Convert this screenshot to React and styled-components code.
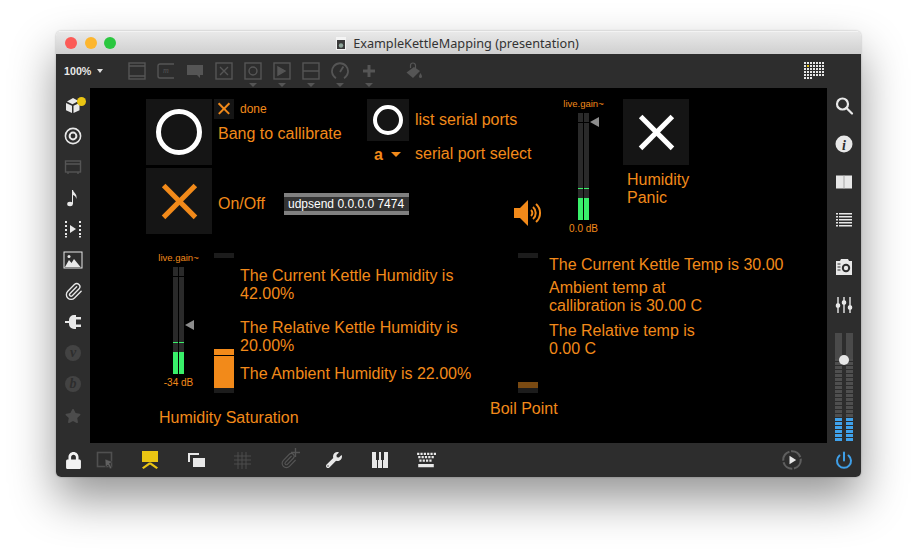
import React from "react";
import styled, { createGlobalStyle } from "styled-components";
import { FaLock, FaStar, FaWrench } from "react-icons/fa";
import { Paperclip } from "lucide-react";

const ORANGE = "#f28a1a";
const DIM = "#555";
const LIGHT = "#e8e8e8";

export default function App() {
  return (
    <>
      <GlobalStyle />
      <Window>
        <TitleBar>
          <Lights>
            <Light $color="#fc5b57" />
            <Light $color="#fdb62e" />
            <Light $color="#2ac73f" />
          </Lights>
          <TitleText>
            <DocIcon viewBox="0 0 10 13">
              <rect width="10" height="13" fill="#f4f4f4" />
              <rect x="1" y="3" width="8" height="9" fill="#3a3a3a" />
              <circle cx="5" cy="8.5" r="2.2" fill="#8fa59a" />
            </DocIcon>
            ExampleKettleMapping (presentation)
          </TitleText>
        </TitleBar>

        <TopBar>
          <ZoomLabel>100%</ZoomLabel>
          <ZoomCaret />
          <ObjectTools>
            <ToolSlot>
              <Icon viewBox="0 0 18 18" fill="none" stroke={DIM} strokeWidth="1.4">
                <rect x="1" y="1" width="16" height="16" />
                <path d="M1 4h16M1 14h16" />
              </Icon>
            </ToolSlot>
            <ToolSlot>
              <Icon viewBox="0 0 18 18" fill="none" stroke={DIM} strokeWidth="1.4">
                <path d="M17 2H3a2 2 0 0 0-2 2v10a2 2 0 0 0 2 2h14" />
                <text x="6" y="11" fontSize="8" fontStyle="italic" fontFamily="Liberation Serif" fill={DIM} stroke="none">m</text>
              </Icon>
            </ToolSlot>
            <ToolSlot>
              <Icon viewBox="0 0 18 18" fill={DIM}>
                <path d="M1 3h16v10h-3v3l-3-3H1z" />
              </Icon>
            </ToolSlot>
            <ToolSlot>
              <Icon viewBox="0 0 18 18" fill="none" stroke={DIM} strokeWidth="1.4">
                <rect x="1" y="1" width="16" height="16" />
                <path d="M5 5l8 8M13 5l-8 8" />
              </Icon>
            </ToolSlot>
            <ToolSlot $menu>
              <Icon viewBox="0 0 18 18" fill="none" stroke={DIM} strokeWidth="1.4">
                <rect x="1" y="1" width="16" height="16" />
                <circle cx="9" cy="9" r="4" />
              </Icon>
            </ToolSlot>
            <ToolSlot $menu>
              <Icon viewBox="0 0 18 18" fill="none" stroke={DIM} strokeWidth="1.4">
                <rect x="1" y="1" width="16" height="16" />
                <path d="M5 5l7 4-7 4z" fill={DIM} />
              </Icon>
            </ToolSlot>
            <ToolSlot $menu>
              <Icon viewBox="0 0 18 18" fill="none" stroke={DIM} strokeWidth="1.4">
                <rect x="1" y="1" width="16" height="16" />
                <path d="M1 9h16" />
              </Icon>
            </ToolSlot>
            <ToolSlot $menu>
              <Icon viewBox="0 0 18 18" fill="none" stroke={DIM} strokeWidth="1.8">
                <path d="M5 16.2A8 8 0 1 1 13 16.2" />
                <path d="M9 10l3.4-5.4" />
              </Icon>
            </ToolSlot>
            <ToolSlot $menu>
              <Icon viewBox="0 0 18 18" fill="none" stroke={DIM} strokeWidth="3">
                <path d="M9 3v12M3 9h12" />
              </Icon>
            </ToolSlot>
            <BucketSlot>
              <Icon viewBox="0 0 18 18" fill={DIM}>
                <path d="M9 5L1.500 10.500 8 16l7-7z" />
                <path d="M5.500 6V3.500a2.500 2.500 0 0 1 5 0V7" fill="none" stroke={DIM} strokeWidth="1.200" />
                <path d="M15.500 11c.8 1.600 1.500 2.400 1.500 3.400a1.500 1.500 0 0 1-3 0c0-1 .7-1.800 1.500-3.400z" />
              </Icon>
            </BucketSlot>
          </ObjectTools>
          <GridIcon viewBox="0 0 20 19">
            {GRID_CELLS.map(([x, y]) => (
              <rect
                key={`${x}-${y}`}
                x={x * 3}
                y={y * 3}
                width="2"
                height="2"
                fill={x === 1 && y === 1 ? "#e8c414" : "#e6e6e6"}
              />
            ))}
          </GridIcon>
        </TopBar>

        <Middle>
          <LeftRail>
            <RailSlot>
              <Icon viewBox="0 0 20 20" fill={LIGHT}>
                <path d="M4 6.500l6-3.500 5.500 3-6 3.200z" />
                <path d="M3 8l6 2.800V18l-6-2.800z" />
                <path d="M10.500 10.800l6-2.800v7.200L10.500 18z" />
              </Icon>
              <Notify />
            </RailSlot>
            <RailSlot>
              <Icon viewBox="0 0 20 20" fill="none" stroke={LIGHT} strokeWidth="1.6">
                <circle cx="10" cy="10" r="7.600" />
                <circle cx="10" cy="10" r="3.400" strokeWidth="2" />
              </Icon>
            </RailSlot>
            <RailSlot>
              <Icon viewBox="0 0 20 20" fill="none" stroke={DIM} strokeWidth="1.400">
                <rect x="2.500" y="4" width="15" height="11" />
                <path d="M2.500 7h15M5 15v2M15 15v2" />
              </Icon>
            </RailSlot>
            <RailSlot>
              <Icon viewBox="0 0 20 20" fill={LIGHT}>
                <ellipse cx="7" cy="16" rx="2.800" ry="2.200" />
                <path d="M9 16V2h1c.4 3 4.800 4 3.300 9-.2-2.500-1.800-3.500-3.300-4v9z" />
              </Icon>
            </RailSlot>
            <RailSlot>
              <Icon viewBox="0 0 20 20" fill={LIGHT}>
                <path d="M2 2h2v2H2zM2 6h2v2H2zM2 10h2v2H2zM2 14h2v2H2zM2 17h2v1.500H2zM16 2h2v2h-2zM16 6h2v2h-2zM16 10h2v2h-2zM16 14h2v2h-2zM16 17h2v1.500h-2z" />
                <path d="M7 6l6 4-6 4z" />
              </Icon>
            </RailSlot>
            <RailSlot>
              <Icon viewBox="0 0 20 20">
                <rect x="1" y="2" width="18" height="16" fill="none" stroke={LIGHT} strokeWidth="1" />
                <path d="M2 17l4-7 2.500 3 2.500-4 6.500 8z" fill={LIGHT} />
                <circle cx="6" cy="6.500" r="1.500" fill={LIGHT} />
              </Icon>
            </RailSlot>
            <RailSlot>
              <Paperclip size={19} color={LIGHT} strokeWidth={1.7} />
            </RailSlot>
            <RailSlot>
              <Icon viewBox="0 0 20 20" fill={LIGHT}>
                <path d="M2 9h4V8a5 5 0 0 1 5-5h2v14h-2a5 5 0 0 1-5-5v-1H2z" />
                <path d="M13 5h5v2.500h-5zM13 12.500h5V15h-5z" />
              </Icon>
            </RailSlot>
            <RailSlot>
              <Badge>v</Badge>
            </RailSlot>
            <RailSlot>
              <Badge>b</Badge>
            </RailSlot>
            <StarSlot>
              <FaStar size={16} color="#4c4c4c" />
            </StarSlot>
          </LeftRail>

          <Canvas>
            <Button $x={56} $y={11} $size={66}>
              <Ring $size={46} $stroke={5} />
            </Button>
            <Button $x={124} $y={11} $size={20}>
              <Cross $size={11} $stroke={2} $color={ORANGE} />
            </Button>
            <Caption $x={150} $y={14}>done</Caption>
            <Label $x={128} $y={37}>Bang to callibrate</Label>
            <Button $x={56} $y={80} $size={66}>
              <Cross $size={32} $stroke={5} $color={ORANGE} />
            </Button>
            <Label $x={128} $y={107}>On/Off</Label>
            <UdpObject>udpsend 0.0.0.0 7474</UdpObject>
            <Button $x={277} $y={11} $size={42}>
              <Ring $size={30} $stroke={4} />
            </Button>
            <Label $x={325} $y={23}>list serial ports</Label>
            <MenuValue>a</MenuValue>
            <MenuCaret />
            <Label $x={325} $y={57}>serial port select</Label>

            <Gain $x={488} $y={25} $thumb={9} $green={22} $tick={31}>
              <GainName>live.gain~</GainName>
              <GainValue>0.0 dB</GainValue>
            </Gain>

            <Button $x={533} $y={11} $size={66}>
              <Cross $size={32} $stroke={5} $color="#fff" />
            </Button>
            <Label $x={537} $y={83}>
              Humidity
              <br />
              Panic
            </Label>
            <SpeakerIcon viewBox="0 0 28 28">
              <path d="M0 9h6l8-8v26l-8-8H0z" fill={ORANGE} />
              <path d="M17 11a4 4 0 0 1 0 6M19 8a8 8 0 0 1 0 12M22 5a12 12 0 0 1 0 18" fill="none" stroke={ORANGE} strokeWidth="2" />
            </SpeakerIcon>

            <Gain $x={83} $y={179} $thumb={58} $green={22} $tick={31}>
              <GainName>live.gain~</GainName>
              <GainValue>-34 dB</GainValue>
            </Gain>

            <Slider $x={124}>
              <SliderFill $height={39} $color={ORANGE}>
                <SliderHandle />
              </SliderFill>
            </Slider>
            <Slider $x={428}>
              <SliderFill $height={6} $color="#7a4a12" />
            </Slider>

            <Label $x={150} $y={179}>
              The Current Kettle Humidity is
              <br />
              42.00%
            </Label>
            <Label $x={150} $y={231}>
              The Relative Kettle Humidity is
              <br />
              20.00%
            </Label>
            <Label $x={150} $y={277}>The Ambient Humidity is 22.00%</Label>
            <Label $x={69} $y={321}>Humidity Saturation</Label>
            <Label $x={400} $y={312}>Boil Point</Label>
            <Label $x={459} $y={168}>The Current Kettle Temp is 30.00</Label>
            <Label $x={459} $y={191}>
              Ambient temp at
              <br />
              callibration is 30.00 C
            </Label>
            <Label $x={459} $y={234}>
              The Relative temp is
              <br />
              0.00 C
            </Label>
          </Canvas>

          <RightRail>
            <SideSlot>
              <Icon viewBox="0 0 20 20" fill="none" stroke={LIGHT} strokeWidth="2.200" strokeLinecap="round">
                <circle cx="8.500" cy="8" r="5.500" />
                <path d="M12.500 12l5.500 5.500" />
              </Icon>
            </SideSlot>
            <SideSlot>
              <Icon viewBox="0 0 20 20">
                <circle cx="10" cy="10" r="8.500" fill={LIGHT} />
                <text x="10" y="15.500" textAnchor="middle" fontSize="14" fontWeight="700" fontStyle="italic" fontFamily="Liberation Serif" fill="#2d2d2d">i</text>
              </Icon>
            </SideSlot>
            <SideSlot>
              <Icon viewBox="0 0 20 20">
                <rect x="2" y="3.500" width="16" height="13" fill={LIGHT} />
                <rect x="9.500" y="3.500" width="1" height="13" fill="#a8a8a8" />
              </Icon>
            </SideSlot>
            <SideSlot>
              <Icon viewBox="0 0 20 20" fill={LIGHT}>
                <path d="M2 3h2v1.500H2zM5 3h13v1.500H5zM2 6h2v1.500H2zM5 6h13v1.500H5zM2 9h2v1.500H2zM5 9h13v1.500H5zM2 12h2v1.500H2zM5 12h13v1.500H5zM2 15h2v1.500H2zM5 15h13v1.500H5z" />
              </Icon>
            </SideSlot>
            <CameraSlot>
              <Icon viewBox="0 0 20 20">
                <path d="M2 4h4l1-2h7l1 2h3v14H2z" fill={LIGHT} />
                <circle cx="12" cy="11" r="4.200" fill="#2d2d2d" />
                <circle cx="12" cy="11" r="2.200" fill={LIGHT} />
                <path d="M3.500 7h3M3.500 10h3M3.500 13h3" stroke="#2d2d2d" strokeWidth="1" />
              </Icon>
            </CameraSlot>
            <SideSlot>
              <Icon viewBox="0 0 20 20" stroke={LIGHT} strokeWidth="1.400" fill={LIGHT}>
                <path d="M4 2v16M10 2v16M16 2v16" />
                <rect x="2.500" y="9" width="3" height="3" rx="1" />
                <rect x="8.500" y="6" width="3" height="3" rx="1" />
                <rect x="14.500" y="11" width="3" height="3" rx="1" />
              </Icon>
            </SideSlot>
            <Volume>
              <VolumeTrack />
              <VolumeTrack />
              <VolumeKnob />
            </Volume>
          </RightRail>
        </Middle>

        <BottomBar>
          <BottomSlot>
            <FaLock size={17} color="#f2f2f2" />
          </BottomSlot>
          <SelectSlot>
            <Icon viewBox="0 0 20 20">
              <rect x="2.500" y="2.500" width="14" height="14" fill="none" stroke="#505050" strokeWidth="1.600" />
              <path d="M10 9l8 3-3.500 1.500L17 18l-2 1-2-4-2.500 2z" fill="#606060" stroke="#2d2d2d" strokeWidth=".6" />
            </Icon>
          </SelectSlot>
          <PresentSlot>
            <Icon viewBox="0 0 20 20" fill="#eac513">
              <path d="M2 1h16v11H2z" />
              <path d="M9 12.500h2l7 5-1.500 1.500L10 14.500 3.500 19 2 17.500z" />
            </Icon>
          </PresentSlot>
          <BottomSlot>
            <Icon viewBox="0 0 20 20" fill={LIGHT}>
              <path d="M2 3h11v2H4v7H2z" />
              <path d="M7 8h12v9H7z" />
            </Icon>
          </BottomSlot>
          <BottomSlot>
            <Icon viewBox="0 0 20 20" fill="none" stroke="#4d4d4d" strokeWidth="1">
              <path d="M6 2v17M10 2v17M14 2v17M2 6h17M2 10h17M2 14h17" />
            </Icon>
          </BottomSlot>
          <BottomSlot>
            <Paperclip size={17} color={DIM} strokeWidth={1.600} />
            <ClipPlus viewBox="0 0 8 8">
              <path d="M4 0v8M0 4h8" stroke={DIM} strokeWidth="1.200" />
            </ClipPlus>
          </BottomSlot>
          <BottomSlot>
            <FaWrench size={16} color={LIGHT} />
          </BottomSlot>
          <BottomSlot>
            <Icon viewBox="0 0 20 20" fill={LIGHT}>
              <path d="M2 2h4v8h1v8H2zM8 10h1V2h2v8h1v8H8zM13 10h1V2h4v16h-5z" />
            </Icon>
          </BottomSlot>
          <BottomSlot>
            <Icon viewBox="1 2 18 17" fill={LIGHT}>
              <path d="M2 4h2v2H2zM5 4h2v2H5zM8 4h2v2H8zM11 4h2v2h-2zM14 4h2v2h-2zM17 4h2v2h-2zM3 7h2v2H3zM6 7h2v2H6zM9 7h2v2H9zM12 7h2v2h-2zM15 7h2v2h-2zM4 10h2v2H4zM7 10h2v2H7zM10 10h2v2h-2zM13 10h2v2h-2zM3 14h14v3H3z" />
            </Icon>
          </BottomSlot>
          <BottomEnd>
            <BottomSlot>
              <Icon viewBox="0 0 24 24">
                <circle cx="12" cy="12" r="10.500" fill="none" stroke="#5e5e5e" strokeWidth="2.500" strokeDasharray="14 2" />
                <path d="M9 7l8 5-8 5z" fill={LIGHT} />
              </Icon>
            </BottomSlot>
            <BottomSlot>
              <Icon viewBox="0 0 20 20" fill="none" stroke="#3f9fe8" strokeWidth="2" strokeLinecap="round">
                <path d="M10 2.500v8" />
                <path d="M5.500 5.500a7 7 0 1 0 9 0" />
              </Icon>
            </BottomSlot>
          </BottomEnd>
        </BottomBar>
      </Window>
    </>
  );
}

const GRID_CELLS = [];
for (let y = 0; y < 6; y++) {
  const cols = y === 5 ? 3 : 7;
  for (let x = 0; x < cols; x++) GRID_CELLS.push([x, y]);
}

const GlobalStyle = createGlobalStyle`
  html, body {
    margin: 0;
    padding: 0;
    background: #fff;
    overflow: hidden;
  }
  body {
    width: 917px;
    height: 557px;
    font-family: "Liberation Sans", Arial, sans-serif;
  }
`;

const Window = styled.div`
  display: flex;
  flex-direction: column;
  width: 805px;
  height: 446px;
  margin: 31px 0 0 56px;
  border-radius: 5px;
  overflow: hidden;
  box-shadow: 0 22px 45px rgba(0, 0, 0, 0.42), 0 0 2px rgba(0, 0, 0, 0.3);
`;

const TitleBar = styled.div`
  position: relative;
  display: flex;
  align-items: center;
  justify-content: center;
  height: 23px;
  flex: none;
  box-sizing: border-box;
  background: linear-gradient(#e9e9e9, #cfcfcf);
  border-top: 1px solid #f3f3f3;
`;

const Lights = styled.div`
  position: absolute;
  left: 9px;
  top: 5px;
  display: flex;
  gap: 7.500px;
`;

const Light = styled.span`
  width: 12px;
  height: 12px;
  border-radius: 50%;
  background: ${(p) => p.$color};
`;

const TitleText = styled.div`
  display: flex;
  align-items: center;
  gap: 7px;
  margin-left: -2px;
  font-family: "Noto Sans", sans-serif;
  font-size: 12.700px;
  color: #333;
`;

const DocIcon = styled.svg`
  width: 10px;
  height: 13px;
`;

const TopBar = styled.div`
  display: flex;
  align-items: center;
  flex: none;
  height: 34px;
  box-sizing: border-box;
  padding: 0 37px 0 8px;
  background: #2d2d2d;
`;

const ZoomLabel = styled.span`
  font-size: 10.700px;
  font-weight: 700;
  color: #e8e8e8;
`;

const ZoomCaret = styled.span`
  margin-left: 6px;
  border-left: 3px solid transparent;
  border-right: 3px solid transparent;
  border-top: 4px solid #e0e0e0;
`;

const ObjectTools = styled.div`
  display: flex;
  align-items: center;
  gap: 11px;
  margin-left: 25px;
  flex: 1;
`;

const ToolSlot = styled.div`
  position: relative;
  width: 18px;
  height: 18px;
  ${(p) =>
    p.$menu &&
    `&::after {
      content: "";
      position: absolute;
      left: 5px;
      bottom: -7px;
      border-left: 4px solid transparent;
      border-right: 4px solid transparent;
      border-top: 4px solid #555;
    }`}
`;

const BucketSlot = styled(ToolSlot)`
  margin-left: 16px;
`;

const Icon = styled.svg`
  display: block;
  width: 100%;
  height: 100%;
`;

const GridIcon = styled.svg`
  width: 20px;
  height: 19px;
`;

const Middle = styled.div`
  display: flex;
  flex: none;
  height: 355px;
`;

const LeftRail = styled.div`
  display: flex;
  flex-direction: column;
  align-items: center;
  gap: 11px;
  width: 34px;
  flex: none;
  box-sizing: border-box;
  padding-top: 7px;
  background: #2d2d2d;
`;

const RailSlot = styled.div`
  position: relative;
  display: flex;
  align-items: center;
  justify-content: center;
  width: 20px;
  height: 20px;
`;

const StarSlot = styled(RailSlot)`
  margin-top: 1px;
`;

const Notify = styled.span`
  position: absolute;
  right: -3px;
  top: 2px;
  width: 9px;
  height: 9px;
  border-radius: 50%;
  background: #eac513;
`;

const Badge = styled.span`
  display: flex;
  align-items: center;
  justify-content: center;
  width: 16px;
  height: 16px;
  border-radius: 50%;
  background: #434343;
  color: #2d2d2d;
  font-family: "Liberation Serif", serif;
  font-style: italic;
  font-weight: 700;
  font-size: 14px;
`;

const Canvas = styled.div`
  position: relative;
  flex: 1;
  background: #000;
  overflow: hidden;
`;

const Button = styled.div`
  position: absolute;
  left: ${(p) => p.$x}px;
  top: ${(p) => p.$y}px;
  display: flex;
  align-items: center;
  justify-content: center;
  width: ${(p) => p.$size}px;
  height: ${(p) => p.$size}px;
  background: #151515;
`;

const Ring = styled.span`
  width: ${(p) => p.$size}px;
  height: ${(p) => p.$size}px;
  box-sizing: border-box;
  border: ${(p) => p.$stroke}px solid #fff;
  border-radius: 50%;
`;

const Cross = styled.span`
  position: relative;
  width: ${(p) => p.$size}px;
  height: ${(p) => p.$size}px;
  &::before,
  &::after {
    content: "";
    position: absolute;
    left: ${(p) => (p.$size - p.$stroke) / 2}px;
    top: -${(p) => p.$size * 0.2}px;
    width: ${(p) => p.$stroke}px;
    height: ${(p) => p.$size * 1.4}px;
    background: ${(p) => p.$color};
  }
  &::before {
    transform: rotate(45deg);
  }
  &::after {
    transform: rotate(-45deg);
  }
`;

const Label = styled.div`
  position: absolute;
  left: ${(p) => p.$x}px;
  top: ${(p) => p.$y}px;
  font-size: 16px;
  line-height: 18px;
  color: ${ORANGE};
  white-space: nowrap;
`;

const Caption = styled(Label)`
  font-size: 12px;
  line-height: 14px;
`;

const UdpObject = styled.div`
  position: absolute;
  left: 194px;
  top: 105px;
  width: 125px;
  height: 22px;
  box-sizing: border-box;
  padding-left: 4px;
  border: solid #808080;
  border-width: 4px 0;
  background: #333;
  color: #fff;
  font-size: 12px;
  line-height: 14px;
  white-space: nowrap;
`;

const MenuValue = styled.div`
  position: absolute;
  left: 284px;
  top: 58px;
  font-size: 16px;
  line-height: 18px;
  font-weight: 700;
  color: ${ORANGE};
`;

const MenuCaret = styled.div`
  position: absolute;
  left: 301px;
  top: 64px;
  border-left: 5px solid transparent;
  border-right: 5px solid transparent;
  border-top: 5px solid ${ORANGE};
`;

const Gain = styled.div`
  position: absolute;
  left: ${(p) => p.$x}px;
  top: ${(p) => p.$y}px;
  width: 11px;
  height: 107px;
  background:
    linear-gradient(#39f06a, #39f06a) left bottom / 5px ${(p) => p.$green}px no-repeat,
    linear-gradient(#39f06a, #39f06a) right bottom / 5px ${(p) => p.$green}px no-repeat,
    linear-gradient(#39f06a, #39f06a) left bottom ${(p) => p.$tick}px / 5px 1px no-repeat,
    linear-gradient(#39f06a, #39f06a) right bottom ${(p) => p.$tick}px / 5px 1px no-repeat,
    linear-gradient(#000, #000) center top 9px / 11px 1px no-repeat,
    linear-gradient(#000, #000) center / 1px 107px no-repeat,
    #2a2a2a;
  &::after {
    content: "";
    position: absolute;
    left: 12px;
    top: ${(p) => p.$thumb - 5}px;
    border-top: 5px solid transparent;
    border-bottom: 5px solid transparent;
    border-right: 9px solid #8c8c8c;
  }
`;

const GainName = styled.div`
  position: absolute;
  left: 50%;
  top: -15px;
  transform: translateX(-50%);
  font-size: 9.500px;
  line-height: 12px;
  color: ${ORANGE};
  white-space: nowrap;
`;

const GainValue = styled(GainName)`
  top: 110px;
  font-size: 10px;
`;

const SpeakerIcon = styled.svg`
  position: absolute;
  left: 424px;
  top: 111px;
  width: 28px;
  height: 28px;
`;

const Slider = styled.div`
  position: absolute;
  left: ${(p) => p.$x}px;
  top: 165px;
  width: 20px;
  height: 140px;
  display: flex;
  flex-direction: column;
  justify-content: flex-end;
  background:
    linear-gradient(#1c1c1c, #1c1c1c) top / 20px 5px no-repeat,
    linear-gradient(#1c1c1c, #1c1c1c) bottom / 20px 5px no-repeat;
  padding-bottom: 5px;
  box-sizing: border-box;
`;

const SliderFill = styled.div`
  position: relative;
  height: ${(p) => p.$height}px;
  background: ${(p) => p.$color};
`;

const SliderHandle = styled.span`
  position: absolute;
  left: 0;
  right: 0;
  top: 6px;
  height: 1px;
  background: #000;
`;

const RightRail = styled.div`
  display: flex;
  flex-direction: column;
  align-items: center;
  gap: 18px;
  width: 34px;
  flex: none;
  box-sizing: border-box;
  padding-top: 8px;
  background: #2d2d2d;
`;

const SideSlot = styled.div`
  display: flex;
  align-items: center;
  justify-content: center;
  width: 20px;
  height: 20px;
`;

const CameraSlot = styled(SideSlot)`
  margin-top: 9px;
`;

const Volume = styled.div`
  position: relative;
  display: flex;
  gap: 4px;
  height: 108px;
`;

const VolumeTrack = styled.div`
  width: 7px;
  height: 100%;
  background:
    linear-gradient(#4a4a4a, #4a4a4a) top / 7px 26px no-repeat,
    repeating-linear-gradient(to top, #3fa2ec 0 3px, #2d2d2d 3px 4px) bottom / 7px 24px no-repeat,
    repeating-linear-gradient(to top, #4f4f4f 0 3px, #2d2d2d 3px 4px) bottom / 7px 108px no-repeat;
`;

const VolumeKnob = styled.span`
  position: absolute;
  left: 4px;
  top: 22px;
  width: 10px;
  height: 10px;
  border-radius: 50%;
  background: #e6e6e6;
`;

const BottomBar = styled.div`
  display: flex;
  align-items: center;
  flex: 1;
  gap: 26px;
  padding: 0 7px;
  background: #2d2d2d;
`;

const BottomSlot = styled.div`
  position: relative;
  display: flex;
  align-items: center;
  justify-content: center;
  width: 20px;
  height: 20px;
`;

const SelectSlot = styled(BottomSlot)`
  margin-left: -14px;
`;

const PresentSlot = styled(BottomSlot)`
  margin-left: -1px;
`;

const ClipPlus = styled.svg`
  position: absolute;
  right: -2px;
  top: -2px;
  width: 9px;
  height: 9px;
`;

const BottomEnd = styled.div`
  display: flex;
  gap: 32px;
  margin-left: auto;
`;
